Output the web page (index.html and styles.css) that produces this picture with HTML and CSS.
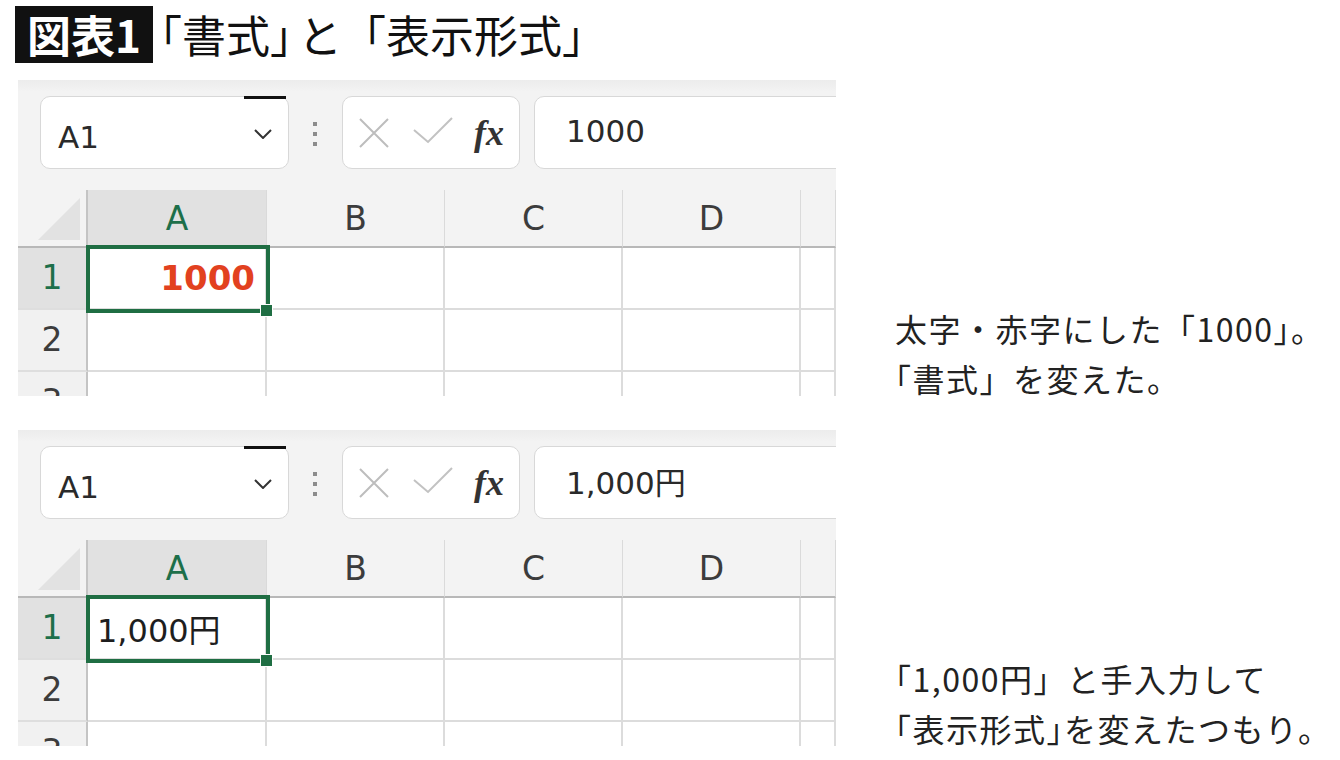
FILE: index.html
```html
<!DOCTYPE html>
<html lang="ja">

<head>
    <meta charset="UTF-8">
    <meta name="viewport" content="width=device-width, initial-scale=1.0">
    <title>図表1</title>
    <link rel="stylesheet" href="styles.css">
</head>

<body>
    <div class="page">
        <h1 class="title"><span class="tag">図表1</span><span class="b">「</span>書式<span class="b gap">」</span>と「表示形式」</h1>

        <!-- 書式 -->
        <div class="fig">
            <div class="sheet">
                <div class="fbar">
                    <div class="namebox">
                        <span>A1</span>
                        <svg class="chev" width="18" height="10" viewBox="0 0 18 10"><path d="M1 1L9 9L17 1" fill="none" stroke="#333" stroke-width="2"/></svg>
                    </div>
                    <div class="dots"><i></i><i></i><i></i></div>
                    <div class="fxbox">
                        <svg class="ico-x" width="32" height="32" viewBox="0 0 32 32"><path d="M2 2L30 30M30 2L2 30" stroke="#bdbdbd" stroke-width="2"/></svg>
                        <svg class="ico-ok" width="40" height="27" viewBox="0 0 40 27"><path d="M1 13L15 25L39 1" fill="none" stroke="#c2c2c2" stroke-width="2"/></svg>
                        <span class="fx">fx</span>
                    </div>
                    <div class="input">1000</div>
                </div>
                <div class="grid">
                    <div class="corner"></div>
                    <div class="ch sel">A</div>
                    <div class="ch">B</div>
                    <div class="ch">C</div>
                    <div class="ch">D</div>
                    <div class="ch"></div>

                    <div class="rh sel">1</div>
                    <div class="cell num">1000</div>
                    <div class="cell"></div>
                    <div class="cell"></div>
                    <div class="cell"></div>
                    <div class="cell"></div>

                    <div class="rh">2</div>
                    <div class="cell"></div>
                    <div class="cell"></div>
                    <div class="cell"></div>
                    <div class="cell"></div>
                    <div class="cell"></div>

                    <div class="rh">3</div>
                    <div class="cell"></div>
                    <div class="cell"></div>
                    <div class="cell"></div>
                    <div class="cell"></div>
                    <div class="cell"></div>

                    <div class="sel-box"></div>
                    <div class="handle"></div>
                </div>
            </div>
            <p class="note">太字・赤字にした「1000<span class="b">」</span>。<br><span class="b">「</span>書式」を変えた。</p>
        </div>

        <!-- 表示形式 -->
        <div class="fig">
            <div class="sheet">
                <div class="fbar">
                    <div class="namebox">
                        <span>A1</span>
                        <svg class="chev" width="18" height="10" viewBox="0 0 18 10"><path d="M1 1L9 9L17 1" fill="none" stroke="#333" stroke-width="2"/></svg>
                    </div>
                    <div class="dots"><i></i><i></i><i></i></div>
                    <div class="fxbox">
                        <svg class="ico-x" width="32" height="32" viewBox="0 0 32 32"><path d="M2 2L30 30M30 2L2 30" stroke="#bdbdbd" stroke-width="2"/></svg>
                        <svg class="ico-ok" width="40" height="27" viewBox="0 0 40 27"><path d="M1 13L15 25L39 1" fill="none" stroke="#c2c2c2" stroke-width="2"/></svg>
                        <span class="fx">fx</span>
                    </div>
                    <div class="input">1,000円</div>
                </div>
                <div class="grid">
                    <div class="corner"></div>
                    <div class="ch sel">A</div>
                    <div class="ch">B</div>
                    <div class="ch">C</div>
                    <div class="ch">D</div>
                    <div class="ch"></div>

                    <div class="rh sel">1</div>
                    <div class="cell txt">1,000円</div>
                    <div class="cell"></div>
                    <div class="cell"></div>
                    <div class="cell"></div>
                    <div class="cell"></div>

                    <div class="rh">2</div>
                    <div class="cell"></div>
                    <div class="cell"></div>
                    <div class="cell"></div>
                    <div class="cell"></div>
                    <div class="cell"></div>

                    <div class="rh">3</div>
                    <div class="cell"></div>
                    <div class="cell"></div>
                    <div class="cell"></div>
                    <div class="cell"></div>
                    <div class="cell"></div>

                    <div class="sel-box"></div>
                    <div class="handle"></div>
                </div>
            </div>
            <p class="note"><span class="b">「</span>1,000円」と手入力して<br><span class="b">「</span>表示形式<span class="b">」</span>を変えたつもり。</p>
        </div>
    </div>
</body>

</html>
```

FILE: styles.css
```css
* {
    margin: 0;
    padding: 0;
    box-sizing: border-box;
}

body {
    background-color: #fff;
    color: #222;
    font-family: "Noto Sans CJK JP", sans-serif;
}

.page {
    padding: 6px 0 0 15px;
}

/* 見出し */
.title {
    display: flex;
    align-items: center;
    height: 57px;
    font-size: 44px;
    font-weight: 400;
    line-height: 57px;
    color: #111;
}

.title .tag {
    height: 57px;
    padding: 0 12px;
    margin-right: 7px;
    background-color: #111;
    color: #fff;
    font-weight: 700;
}

.title .b {
    font-feature-settings: "halt";
}

.title .gap {
    margin-right: 6px;
}

.fig {
    display: flex;
    align-items: flex-start;
    height: 316px;
    margin: 17px 0 0 3px;
}

.fig + .fig {
    margin-top: 34px;
}

/* シート */
.sheet {
    flex-shrink: 0;
    width: 818px;
    height: 316px;
    overflow: hidden;
    background: linear-gradient(#ececec, #f3f3f3 12px);
    font-family: "DejaVu Sans", "Noto Sans CJK JP", sans-serif;
}

.fbar {
    display: flex;
    align-items: flex-start;
    height: 110px;
    padding: 16px 0 0 22px;
}

.fbar > * {
    flex-shrink: 0;
}

.namebox {
    position: relative;
    display: flex;
    align-items: center;
    justify-content: space-between;
    width: 249px;
    height: 73px;
    padding: 8px 16px 0 17px;
    background-color: #fff;
    border: 1px solid #d8d8d8;
    border-radius: 10px;
    font-size: 31px;
    color: #2a2a2a;
}

.namebox::before {
    content: "";
    position: absolute;
    top: -1px;
    left: 203px;
    width: 42px;
    height: 3px;
    background-color: #111;
}

.namebox .chev {
    margin-bottom: 6px;
}

.dots {
    display: flex;
    flex-direction: column;
    gap: 6px;
    margin: 26px 0 0 24px;
}

.dots i {
    display: block;
    width: 4px;
    height: 4px;
    background-color: #8c8c8c;
}

.fxbox {
    display: flex;
    align-items: center;
    width: 178px;
    height: 73px;
    margin-left: 25px;
    padding-left: 15px;
    background-color: #fff;
    border: 1px solid #d8d8d8;
    border-radius: 10px;
}

.fxbox .ico-ok {
    margin: 0 0 4px 23px;
}

.fxbox .fx {
    margin-left: 21px;
    font-family: "Liberation Serif", serif;
    font-style: italic;
    font-weight: 700;
    font-size: 36px;
    color: #333;
}

.input {
    display: flex;
    align-items: center;
    width: 400px;
    height: 73px;
    margin-left: 14px;
    padding: 0 0 4px 31px;
    background-color: #fff;
    border: 1px solid #d8d8d8;
    border-radius: 10px;
    font-size: 31px;
    color: #2a2a2a;
}

/* グリッド */
.grid {
    position: relative;
    display: grid;
    grid-template-columns: 70px 179px 178px 178px 178px 35px;
    grid-template-rows: 58px 62px 62px 62px;
    height: 206px;
    overflow: hidden;
    background-color: #fff;
}

.corner {
    position: relative;
    background-color: #f3f3f3;
    border-right: 2px solid #c4c4c4;
    border-bottom: 2px solid #b8b8b8;
}

.corner::after {
    content: "";
    position: absolute;
    right: 6px;
    bottom: 6px;
    width: 42px;
    height: 42px;
    background-color: #e2e2e2;
    clip-path: polygon(100% 0, 100% 100%, 0 100%);
}

.ch {
    display: flex;
    align-items: center;
    justify-content: center;
    background-color: #f3f3f3;
    border-right: 1px solid #dadada;
    border-bottom: 2px solid #b8b8b8;
    font-size: 33px;
    color: #3c3c3c;
}

.ch.sel {
    background-color: #e1e1e1;
    color: #1d6f4a;
}

.rh {
    display: flex;
    justify-content: center;
    padding-top: 10px;
    background-color: #f1f1f1;
    border-right: 2px solid #c4c4c4;
    border-bottom: 2px solid #dedede;
    font-size: 33px;
    color: #3c3c3c;
}

.rh.sel {
    background-color: #e1e1e1;
    color: #1d6f4a;
}

.cell {
    display: flex;
    align-items: center;
    border-right: 2px solid #dcdcdc;
    border-bottom: 2px solid #dcdcdc;
}

.cell.num {
    justify-content: flex-end;
    padding-right: 10px;
    font-weight: 700;
    font-size: 34px;
    color: #e2411f;
}

.cell.txt {
    padding-left: 9px;
    font-size: 32px;
    color: #1e1e1e;
}

.sel-box {
    position: absolute;
    top: 55px;
    left: 68px;
    width: 184px;
    height: 68px;
    border: 4px solid #1f6e43;
}

.handle {
    position: absolute;
    top: 114px;
    left: 242px;
    width: 13px;
    height: 13px;
    background-color: #1f6e43;
    border: 1px solid #fff;
}

/* 説明 */
.note {
    margin: 223px 0 0 59px;
    font-size: 32px;
    line-height: 50px;
    letter-spacing: 1.5px;
    white-space: nowrap;
    color: #222;
}

.note .b {
    font-feature-settings: "halt";
}
```
